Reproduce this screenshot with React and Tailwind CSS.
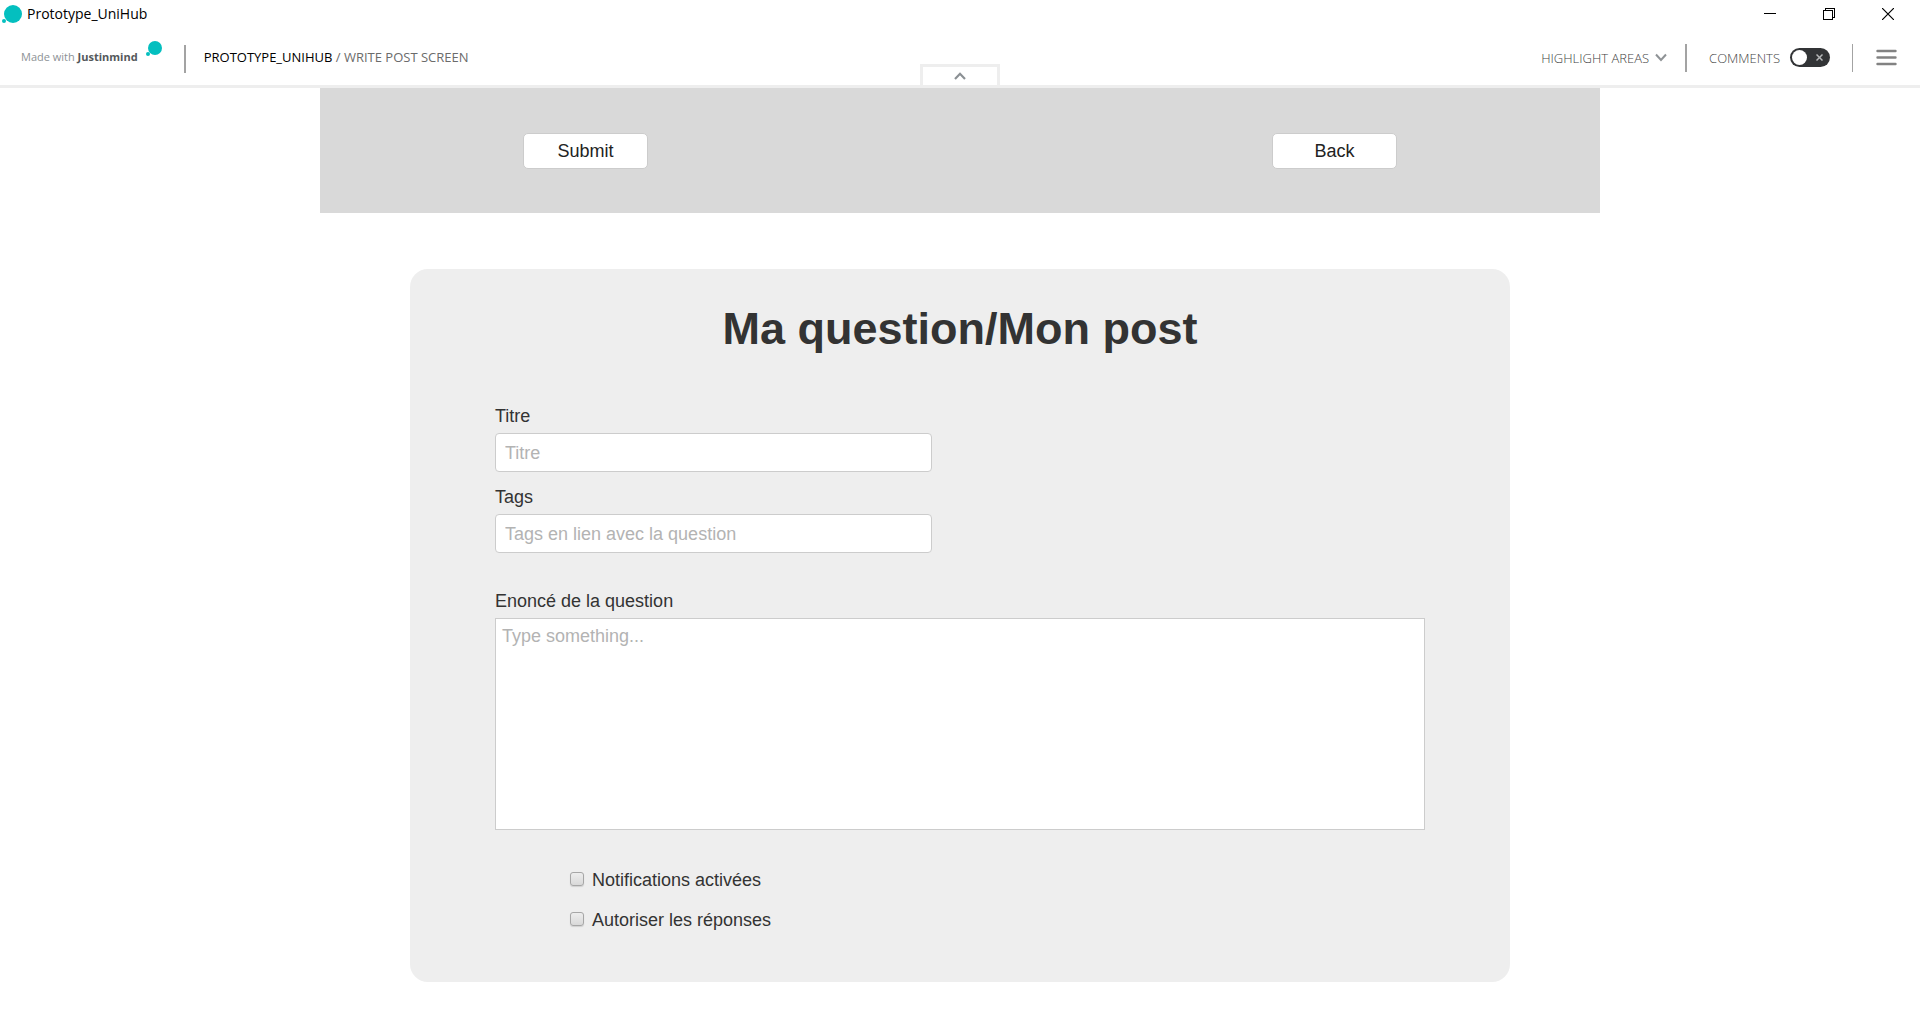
import { useState } from "react";

function TitleBar() {
  return (
    <div className="flex h-7 items-center justify-between">
      <div className="flex items-center gap-1 pl-[2px]">
        <svg width="21" height="20" viewBox="0 0 21 20" aria-hidden="true">
          <circle cx="11" cy="10" r="9" fill="#04bfbf" />
          <circle cx="2" cy="17" r="2" fill="#04bfbf" />
        </svg>
        <h1 className="text-[14px] leading-5 text-black">Prototype_UniHub</h1>
      </div>
      <div className="flex items-center gap-[35px] pr-[20px]">
        <button type="button" aria-label="Minimize" className="p-[6px]">
          <svg width="12" height="12" viewBox="0 0 12 12" shapeRendering="crispEdges">
            <path d="M0 5.5H12" stroke="#000" />
          </svg>
        </button>
        <button type="button" aria-label="Restore" className="p-[6px]">
          <svg width="12" height="12" viewBox="0 0 12 12" fill="none" stroke="#000" shapeRendering="crispEdges">
            <path d="M0.5 2.5H9.5V11.5H0.5Z" />
            <path d="M2.5 2.5V0.5H11.5V9.5H9.5" />
          </svg>
        </button>
        <button type="button" aria-label="Close" className="p-[6px]">
          <svg width="12" height="12" viewBox="0 0 12 12">
            <path d="M0 0L12 12M12 0L0 12" stroke="#000" strokeWidth="1.2" />
          </svg>
        </button>
      </div>
    </div>
  );
}

function Header() {
  const [comments, setComments] = useState(false);
  return (
    <header className="relative flex h-[60px] items-center justify-between border-b-[3px] border-[#eeeeee]">
      <div className="flex items-center">
        <a href="#home" className="flex items-center pl-[21px] text-[11px] leading-5 text-[#8d9296]">
          <span>
            Made with <b className="font-bold text-[#54585b]">Justinmind</b>
          </span>
          <svg className="mb-4 ml-2" width="16" height="16" viewBox="0 0 16 16" aria-hidden="true">
            <circle cx="9" cy="7" r="7" fill="#04bfbf" />
            <circle cx="2" cy="13" r="2" fill="#04bfbf" />
          </svg>
        </a>
        <div className="mt-1 mr-[18px] ml-[22px] h-7 w-[2px] bg-[#a3a3a3]" />
        <nav aria-label="Breadcrumb" className="text-[13px] leading-5 text-[#6b6b6b]">
          <span className="text-black">PROTOTYPE_UNIHUB</span> / WRITE POST SCREEN
        </nav>
      </div>

      <div className="flex items-center pt-[2px] pr-[23px] text-[13px] leading-5 font-light text-[#444]">
        <button type="button" className="flex items-center gap-[6px]">
          HIGHLIGHT AREAS
          <svg width="12" height="9" viewBox="0 0 12 9" fill="none" stroke="#8f9396" strokeWidth="2">
            <path d="M1 1.5L6 7L11 1.5" />
          </svg>
        </button>
        <div className="mr-[22px] ml-[18px] h-7 w-[2px] bg-[#a3a3a3]" />
        <label htmlFor="comments">COMMENTS</label>
        <span className="relative ml-[10px] flex h-[19px] w-10 items-center rounded-full bg-[#323436] px-[2px]">
          <input
            id="comments"
            type="checkbox"
            role="switch"
            checked={comments}
            onChange={(e) => setComments(e.target.checked)}
            className="h-[15px] w-[15px] appearance-none rounded-full bg-white checked:ml-auto"
          />
          <svg className="absolute right-[7px]" width="7" height="7" viewBox="0 0 7 7" stroke="#b5b7b8" strokeWidth="1.5" aria-hidden="true">
            <path d="M0.5 0.5L6.5 6.5M6.5 0.5L0.5 6.5" />
          </svg>
        </span>
        <div className="mr-[23px] ml-[22px] h-7 w-px bg-[#a3a3a3]" />
        <button type="button" aria-label="Menu">
          <svg width="21" height="17" viewBox="0 0 21 17" stroke="#828282" strokeWidth="2.4" strokeLinecap="round">
            <path d="M1.5 2H19.5M1.5 8.5H19.5M1.5 15H19.5" />
          </svg>
        </button>
      </div>

      <button
        type="button"
        aria-label="Collapse toolbar"
        className="absolute bottom-0 left-1/2 flex h-[21px] w-20 -translate-x-1/2 items-center justify-center border-[3px] border-b-0 border-[#eeeeee] bg-white"
      >
        <svg width="12" height="8" viewBox="0 0 12 8" fill="none" stroke="#8b9094" strokeWidth="2.2">
          <path d="M1 7L6 1.8L11 7" />
        </svg>
      </button>
    </header>
  );
}

function ActionButton({ children }) {
  return (
    <button
      type="button"
      className="h-9 w-[125px] rounded-[5px] border border-[#cccccc] bg-white text-[18px] leading-6 text-[#222]"
    >
      {children}
    </button>
  );
}

function TextField({ id, label, placeholder }) {
  return (
    <div className="flex flex-col gap-[5px]">
      <label htmlFor={id} className="leading-6">{label}</label>
      <input
        id={id}
        type="text"
        placeholder={placeholder}
        className="h-[39px] w-full rounded-[4px] border border-[#cccccc] bg-white px-[9px] pt-[2px] placeholder:text-[#b3b3b3]"
      />
    </div>
  );
}

function CheckField({ id, label }) {
  return (
    <div className="flex items-center gap-2">
      <input
        id={id}
        type="checkbox"
        className="mb-[2px] h-[14px] w-[14px] appearance-none rounded-[3px] border border-[#a6a6a6] bg-linear-to-b from-[#ededed] to-[#d9d9d9] shadow-[0_1px_1px_#d0d0d0] checked:bg-[#555]"
      />
      <label htmlFor={id} className="leading-6">{label}</label>
    </div>
  );
}

export default function App() {
  return (
    <div className="min-h-screen bg-white font-['Open_Sans',sans-serif]">
      <TitleBar />
      <Header />
      <main className="mx-auto max-w-7xl font-['Liberation_Sans',Arial,sans-serif]">
        <div className="flex justify-between bg-[#d9d9d9] px-[203px] pt-[45px] pb-11">
          <ActionButton>Submit</ActionButton>
          <ActionButton>Back</ActionButton>
        </div>

        <form
          className="mx-auto mt-14 max-w-[1100px] rounded-[18px] bg-[#eeeeee] px-[85px] pt-8 pb-[50px] text-[18px] text-[#333]"
          onSubmit={(e) => e.preventDefault()}
        >
          <h2 className="text-center text-[45px] leading-[56px] font-bold">Ma question/Mon post</h2>
          <div className="mt-[47px] flex w-[437px] max-w-full flex-col gap-[13px]">
            <TextField id="titre" label="Titre" placeholder="Titre" />
            <TextField id="tags" label="Tags" placeholder="Tags en lien avec la question" />
          </div>
          <div className="mt-9 flex flex-col gap-[5px]">
            <label htmlFor="enonce" className="leading-6">Enoncé de la question</label>
            <textarea
              id="enonce"
              placeholder="Type something..."
              className="h-[212px] w-full resize-none border border-[#cccccc] bg-white px-[6px] py-[5px] leading-6 placeholder:text-[#b3b3b3]"
            />
          </div>
          <div className="mt-[38px] flex flex-col gap-4 pl-[75px]">
            <CheckField id="notifications" label="Notifications activées" />
            <CheckField id="reponses" label="Autoriser les réponses" />
          </div>
        </form>
      </main>
    </div>
  );
}
